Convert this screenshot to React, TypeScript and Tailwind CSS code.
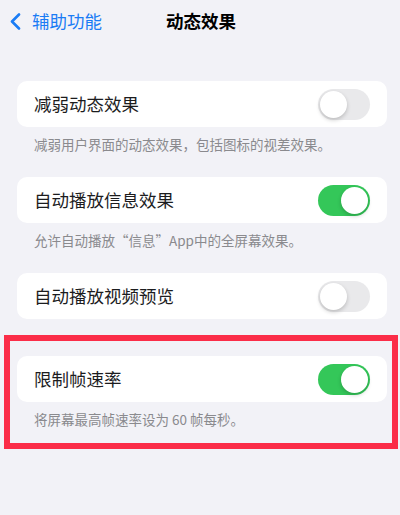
import React from "react";

const font = { fontFamily: '"Noto Sans CJK SC", "Noto Sans", sans-serif' };

function Toggle({ on }: { on: boolean }) {
  return on ? (
    <div className="w-[52px] h-[31px] rounded-full bg-[#34c759] flex items-center justify-end px-[2px]">
      <div className="w-[27px] h-[27px] rounded-full bg-white shadow-[0_2px_4px_rgba(0,0,0,0.2)]" />
    </div>
  ) : (
    <div className="w-[52px] h-[31px] rounded-full bg-[#e9e9eb] flex items-center justify-start px-[2px]">
      <div className="w-[27px] h-[27px] rounded-full bg-white shadow-[0_2px_4px_rgba(0,0,0,0.2)]" />
    </div>
  );
}

function Card({ label, on }: { label: string; on: boolean }) {
  return (
    <div className="h-[46px] rounded-[10px] bg-white flex items-center justify-between pl-[17px] pr-[17px]">
      <span className="text-[17.5px] text-[#1c1c1e] leading-none">{label}</span>
      <Toggle on={on} />
    </div>
  );
}

function Footer({ children }: { children: React.ReactNode }) {
  return (
    <div className="px-[17px] pt-[8px] h-[26px] text-[13.5px] leading-[18px] text-[#8a8a8e]">{children}</div>
  );
}

export default function App() {
  return (
    <div className="w-[400px] h-[515px] bg-[#f2f2f7] overflow-hidden" style={font}>
      <div className="relative h-[42px] flex items-center">
        <div className="flex items-center pl-[9px]">
          <svg width="12" height="17" viewBox="0 0 12 17" fill="none">
            <path d="M10 1.5L3 8.5L10 15.5" stroke="#1a7cf5" strokeWidth="2.6" strokeLinecap="round" strokeLinejoin="round" />
          </svg>
          <span className="ml-[11px] text-[17.5px] text-[#1a7cf5] leading-none">辅助功能</span>
        </div>
        <div className="absolute left-[166px] top-0 h-[42px] flex items-center">
          <span className="text-[17.5px] font-semibold text-black leading-none">动态效果</span>
        </div>
      </div>

      <div className="mt-[39px] pl-[17px] pr-[13px]">
        <Card label="减弱动态效果" on={false} />
        <Footer>减弱用户界面的动态效果，包括图标的视差效果。</Footer>
      </div>

      <div className="mt-[24px] pl-[17px] pr-[13px]">
        <Card label="自动播放信息效果" on={true} />
        <Footer>允许自动播放“信息”App中的全屏幕效果。</Footer>
      </div>

      <div className="mt-[24px] pl-[17px] pr-[13px]">
        <Card label="自动播放视频预览" on={false} />
      </div>

      <div className="mt-[16px] ml-[4px] w-[394px] border-[6px] border-[#fb2d48] pt-[15px] pb-[15px] pl-[7px] pr-[5px]">
        <Card label="限制帧速率" on={true} />
        <Footer>将屏幕最高帧速率设为<span className="px-[3px]">60</span>帧每秒。</Footer>
      </div>
    </div>
  );
}
